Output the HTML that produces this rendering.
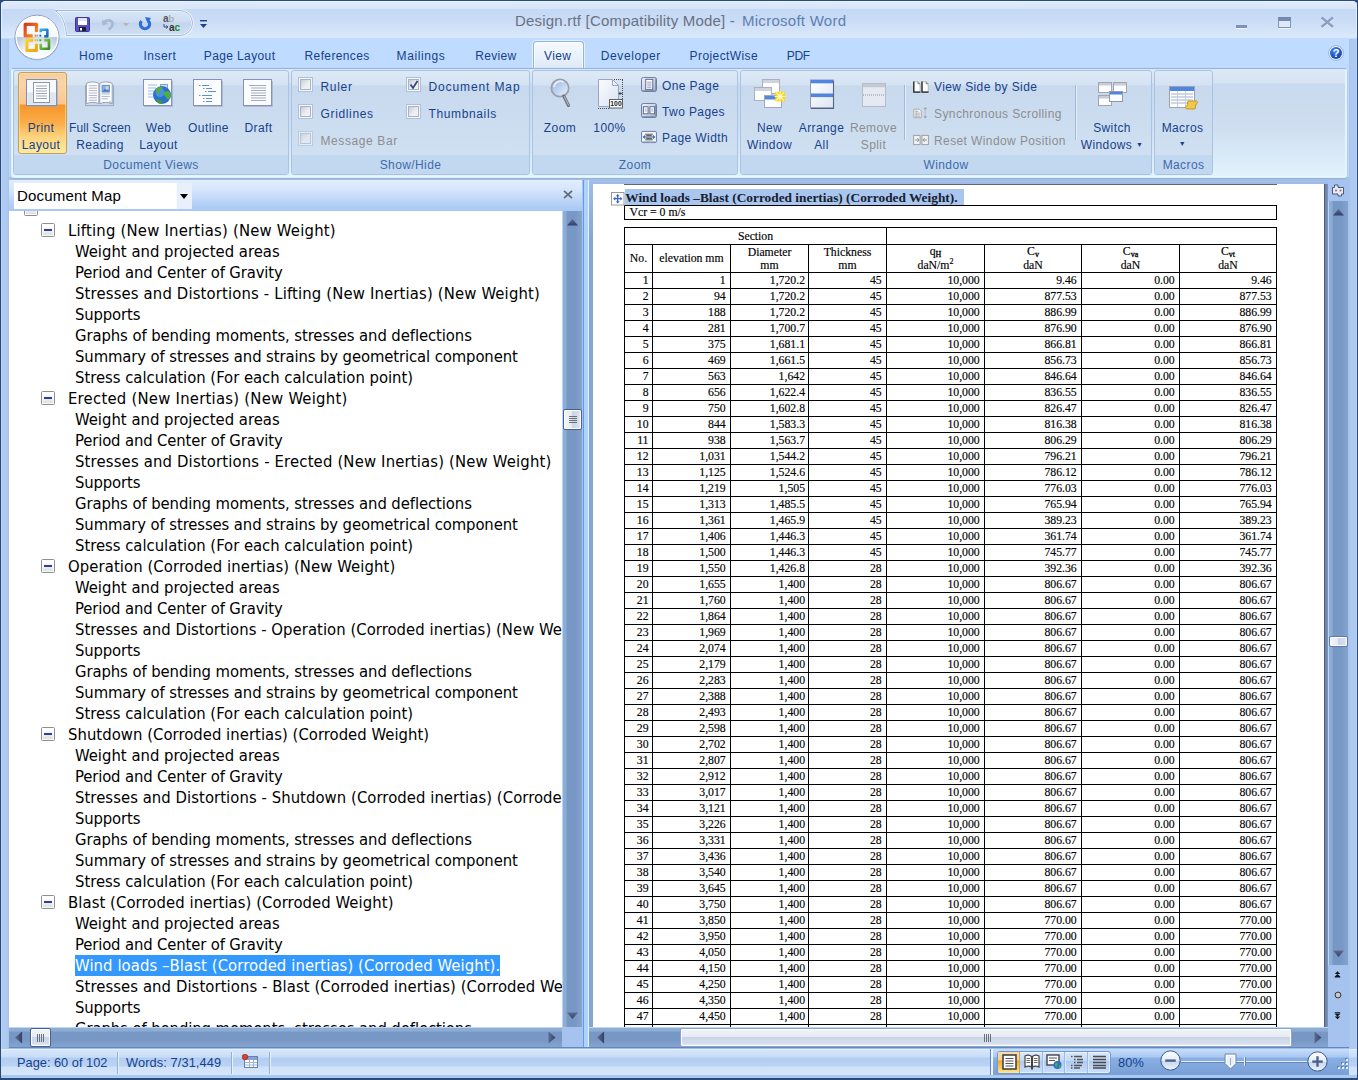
<!DOCTYPE html>
<html lang="en">
<head>
<meta charset="utf-8">
<title>Design.rtf [Compatibility Mode] - Microsoft Word</title>
<style>
*{box-sizing:border-box;margin:0;padding:0}
html,body{width:1358px;height:1080px;overflow:hidden}
body{position:relative;background:#2a4a7a;font-family:"Liberation Sans",sans-serif;font-size:12px;color:#15428b}
.abs{position:absolute}
#win{position:absolute;left:1px;top:1px;width:1356px;height:1077px;background:#bfdbff;border-radius:4.500px 4.500px 0 0;overflow:hidden}
#titlebar{position:absolute;left:0;top:0;width:1356px;height:37px;background:linear-gradient(#eef5fd 0,#e0ebfa 1px,#d6e5f9 8px,#c5d9f5 8.500px,#cadcf6 20px,#dae8fa 36px);box-shadow:inset 1px 0 0 #e6f0fc,inset -1px 0 0 #e6f0fc}
#titlebar:after{content:"";position:absolute;left:0;right:0;bottom:0;height:1px;background:#d9e9fb}
#lframe{position:absolute;left:0;top:38px;width:8px;bottom:0;background:linear-gradient(90deg,#c5d9f5 0,#afcaf0 1px,#afcaf0 6px,#a7c2ea 8px)}
#rframe{position:absolute;right:0;top:38px;width:8px;bottom:0;background:linear-gradient(90deg,#a9c4ec 0,#afcaf0 2px,#afcaf0 7px,#c5d9f5 8px)}
#title{position:absolute;left:514px;top:10.500px;font-size:15px;letter-spacing:.27px;color:#5e6f8c;white-space:nowrap}
/* tabs */
.tab{position:absolute;top:48px;font-size:12px;letter-spacing:.4px;white-space:nowrap;color:#15428b}
#acttab{position:absolute;left:532px;top:40px;width:51px;height:28px;border:1px solid #8fb4e6;border-bottom:none;border-radius:3.500px 3.500px 0 0;background:linear-gradient(#f6faff,#e9f1fc 55%,#dde8f6);box-shadow:0 0 0 1px rgba(232,243,255,.85),inset 0 0 0 1px rgba(255,255,255,.7)}
/* ribbon */
#ribbon{position:absolute;left:10px;top:67px;width:1336px;height:110px;border:1px solid #dff4ff;border-top-color:#8fb3e4;box-shadow:inset 0 -1px 0 #e6f8ff,inset 1px 0 0 #e6f8ff,inset -1px 0 0 #e6f8ff,0 1px 2px 0 #94abcc;border-radius:3px;background:linear-gradient(#dfe9f6 0,#d6e3f3 14px,#c9d9ee 15px,#cfdff0 60px,#e2f3fd 100%)}
.grp{position:absolute;top:69px;height:105px;border:1px solid #a9c3e4;border-radius:3px;background:linear-gradient(#dfe9f6 0,#d4e2f3 14px,#c8d9ee 15px,#d0e0f2 85px);overflow:hidden}
.grp .glab{position:absolute;left:0;right:0;bottom:0;height:19px;background:#c2d8f1;text-align:center;font-size:12px;letter-spacing:.4px;line-height:21px;color:#3e6aaa}
.bl{position:absolute;text-align:center;font-size:12px;letter-spacing:.4px;line-height:17px;white-space:nowrap;color:#15428b;transform:translateX(-50%)}
.sl{position:absolute;font-size:12px;letter-spacing:.4px;line-height:14px;white-space:nowrap;color:#15428b}
.dis{color:#8d8d8d}
.cb{position:absolute;width:15px;height:15px;border:1px solid #a9c0e2;background:linear-gradient(135deg,#c6ccd5 15%,#eceef1 55%,#f6f6f6);box-shadow:inset 0 0 0 1px #f7f7f7,inset 0 0 0 2px #aab3c2}
/* doc map */
#mapwrap{position:absolute;left:8px;top:179px;width:574px;height:868px;background:#c5dcf8}
#maphead{position:absolute;left:0;top:0;width:574px;height:31px;background:linear-gradient(#e3eeff 0,#d5e5fc 10px,#b4d0f7 24px,#a7c7f4 31px)}
#mapcombo{position:absolute;left:5px;top:3px;width:178px;height:26px;background:#fff;font-family:"Liberation Sans",sans-serif;font-size:15px;letter-spacing:.2px;color:#000;line-height:25px;padding-left:3px}
#mapcombo i{position:absolute;right:0;top:0;width:16px;height:26px;background:#e9f0fb;border-left:1px solid #f8fbff}
#mapcombo i:after{content:"";position:absolute;left:2.500px;top:10.500px;border:4.700px solid transparent;border-top:5px solid #000;border-bottom:none}
#maplist{position:absolute;left:0;top:31px;width:553px;height:816px;background:#fff;overflow:hidden;color:#000;font-family:"DejaVu Sans Condensed","Liberation Sans",sans-serif;font-size:16.5px;letter-spacing:0;line-height:21px;white-space:nowrap}
#maplist .in{position:absolute;left:0;top:-12px}
.l1{padding-left:59px;position:relative;height:21px}
.l2{padding-left:66px;height:21px}
.mn{position:absolute;left:32px;top:3px;width:14px;height:14px;border:1px solid #8e8e8e;border-radius:1.500px;background:linear-gradient(#fff 20%,#dcdcdc);box-shadow:inset 0 0 0 1px rgba(255,255,255,.8)}
.mn:after{content:"";position:absolute;left:2px;top:5px;width:8px;height:2px;background:#2c3f9c}
.l0{padding-left:42px;position:relative;height:21px}
.l0 .mn{left:15px}
.l0 span{position:relative;top:-7px}
.sel{background:#3399ff;color:#fff;display:inline-block;height:21px}
/* doc */
#docwrap{position:absolute;left:588px;top:179px;width:739px;height:847px;background:linear-gradient(#a3c0e9 0,#9dbbe8 5px,#84a5d6 60px);overflow:hidden}
#page{position:absolute;left:4px;top:4px;width:732px;height:860px;border-right:1px solid #4f5f7c;box-shadow:1px 0 0 #6c82a8,2px 0 0 #7189b0,3px 0 0 #7a93bb;background:#fff;font-family:"Liberation Serif",serif;color:#000;font-size:12px}
table{border-collapse:collapse;table-layout:fixed}
#dt{position:absolute;left:31px;top:43px;width:653px}
#dt td,#dt th{border:1px solid #000;font-weight:normal;font-size:11.75px;line-height:15px;height:16px;padding:0 4.300px 0 0;text-align:right;overflow:hidden;white-space:nowrap;-webkit-text-stroke:.15px #000}
#dt td:nth-child(3){padding-right:3px}
#dt td:nth-child(1){padding-right:3.500px}
#dt th{text-align:center;padding:0;line-height:13px}
/* status */
#status{position:absolute;left:0;top:1048px;width:1356px;height:26px;background:linear-gradient(#f3f8fe 0,#d6e6fa 1px,#c9ddf8 8px,#b3cdf3 9px,#bad3f4 17px,#cfe1f8 18px,#d6e6fa 26px);font-size:12.800px;color:#15428b}
#srt{position:absolute;left:991px;top:0;width:357px;height:26px;background:linear-gradient(#c9def9 0,#a9c8f3 8px,#8aafe3 9px,#7a9fd6 26px)}
#status .t{position:absolute;top:6px;letter-spacing:.1px;white-space:nowrap}
.ssep{position:absolute;top:3px;width:2px;height:22px;border-left:1px solid #8fb0dd;border-right:1px solid #e8f1fd}

.vsb{background:linear-gradient(90deg,#b9d7ff 0,#b9d7ff 1px,#8fadd3 1px,#8fadd3 4px,#7797c5 5px,#7797c5 13px,#84a2cb 19px)}
.hsb{background:linear-gradient(#b9d7ff 0,#b9d7ff 1px,#8fadd3 1px,#8fadd3 4px,#7797c5 5px,#7797c5 13px,#84a2cb 19px)}
.thumb{border:1px solid #4a5f8f;border-radius:2px;background:linear-gradient(90deg,#f2f4f7 0,#e6ebf3 45%,#c9d6e8 50%,#d5dfee 85%,#edf1f7);box-shadow:inset 0 0 0 1px #fff}
.thumbh{border:1px solid #4a5f8f;border-radius:2px;background:linear-gradient(#f2f4f7 0,#e6ebf3 45%,#c9d6e8 50%,#d5dfee 85%,#edf1f7);box-shadow:inset 0 0 0 1px #fff}
.gh{position:absolute;left:5px;top:6px;width:8px;height:7px;background:repeating-linear-gradient(#6b6f78 0,#6b6f78 1px,transparent 1px,transparent 2px)}
.gv{position:absolute;left:6px;top:5px;width:7px;height:8px;background:repeating-linear-gradient(90deg,#6b6f78 0,#6b6f78 1px,transparent 1px,transparent 2px)}
.vsep{position:absolute;top:3px;width:1px;height:21px;background:#9dbbe6;box-shadow:1px 0 0 #dbe8fa}
.sb{font-size:8px;position:relative;top:1.500px;-webkit-text-stroke:.3px #000}
</style>
</head>
<body>
<div id="win">
<div id="titlebar"></div>
<div id="lframe"></div><div id="rframe"></div>
<div id="title"><span style="letter-spacing:.2px;color:#6a7182">Design.rtf [Compatibility Mode] - </span><span style="color:#5f7fb2;position:absolute;left:227px;top:0">Microsoft Word</span></div>

<!--QAT-->
<!-- QAT pill -->
<svg class="abs" style="left:40px;top:8px" width="180" height="32" viewBox="0 0 180 32">
 <defs><linearGradient id="qg" x1="0" y1="0" x2="0" y2="1"><stop offset="0" stop-color="#d9e6f8"/><stop offset=".45" stop-color="#cddcf2"/><stop offset=".5" stop-color="#c3d5ee"/><stop offset="1" stop-color="#cfdff4"/></linearGradient></defs>
 <path d="M14 1.500H139a12.500 12.500 0 0 1 0 25H25.500C25 16 21 5 14 1.500Z" fill="url(#qg)" stroke="#f4f8fd" stroke-width="2.400"/>
 <path d="M14 1.500H139a12.500 12.500 0 0 1 0 25H25.500C25 16 21 5 14 1.500Z" fill="none" stroke="#9db9dd" stroke-width="1"/>
</svg>
<!-- save -->
<svg class="abs" style="left:74px;top:16px" width="15" height="15" viewBox="0 0 15 15"><rect x=".5" y=".5" width="14" height="14" rx="1" fill="#5452c4" stroke="#3a3796"/><rect x="3" y="1" width="9" height="7" fill="#fff"/><rect x="3" y="1" width="9" height="3" fill="#dfe4f2"/><rect x="4" y="10" width="7" height="4" fill="#1c1c3a"/><rect x="5" y="11" width="2" height="2.500" fill="#fff"/></svg>
<!-- undo -->
<svg class="abs" style="left:100px;top:16px" width="14" height="14" viewBox="0 0 14 14"><path d="M2 6.500C5 2 11 2.500 11.500 6.500c.3 2.500-1.500 4.500-4 6" fill="none" stroke="#a9b9d2" stroke-width="2.800"/><path d="M1 2.500l.5 6 5.500-1.500z" fill="#a9b9d2"/></svg>
<svg class="abs" style="left:122px;top:22px" width="6" height="4" viewBox="0 0 6 4"><path d="M0 0h6L3 3.500z" fill="#b5b5b5"/></svg>
<!-- redo -->
<svg class="abs" style="left:137px;top:16px" width="14" height="14" viewBox="0 0 14 14"><path d="M3.500 4A4.600 4.600 0 1 0 10.500 4" fill="none" stroke="#2f6edb" stroke-width="3.200"/><path d="M7 0l6 1-3.500 5z" fill="#2f6edb"/></svg>
<!-- ab ac -->
<div class="abs" style="left:162px;top:13px;font-size:10px;line-height:9px;color:#555;font-weight:bold;letter-spacing:0"><span style="font-family:'Liberation Sans',sans-serif">a</span><span style="font-family:'Liberation Serif',serif;font-weight:normal;color:#999;font-size:11px">b</span></div>
<div class="abs" style="left:168px;top:22px;font-size:10px;line-height:9px;color:#333;font-weight:bold;letter-spacing:0">a<span style="color:#1a8a1a">c</span></div>
<svg class="abs" style="left:162px;top:23px" width="6" height="6" viewBox="0 0 6 6"><path d="M1 0v3h3M3 1.500l2 1.500-2 1.500" fill="none" stroke="#3a4a8a" stroke-width="1"/></svg>
<!-- customize -->
<svg class="abs" style="left:199px;top:18px" width="8" height="10" viewBox="0 0 8 10"><rect x="0" y="1" width="7" height="1.400" fill="#1f3f88"/><path d="M0 5h7L3.500 9z" fill="#1f3f88"/></svg>

<!-- office button -->
<svg class="abs" style="left:11.700px;top:11.500px" width="48" height="49" viewBox="0 0 48 49">
 <defs>
  <linearGradient id="obt" x1="0" y1="0" x2="0" y2="1"><stop offset="0" stop-color="#ffffff"/><stop offset="1" stop-color="#eef1f6"/></linearGradient>
  <radialGradient id="obb" cx=".5" cy="1.050" r=".95"><stop offset="0" stop-color="#ffffff"/><stop offset=".38" stop-color="#f4f6fa"/><stop offset=".66" stop-color="#c3cfe2"/><stop offset=".86" stop-color="#9fb0cc"/></radialGradient>
  <linearGradient id="lo" x1="0" y1="0" x2="1" y2="1"><stop offset="0" stop-color="#d9381e"/><stop offset=".6" stop-color="#f26f21"/><stop offset="1" stop-color="#f99b1c"/></linearGradient>
  <linearGradient id="lb" x1="0" y1="0" x2="1" y2="1"><stop offset="0" stop-color="#35b0ee"/><stop offset="1" stop-color="#0b63b8"/></linearGradient>
  <linearGradient id="ly" x1="0" y1="0" x2="1" y2="1"><stop offset="0" stop-color="#fbd21a"/><stop offset="1" stop-color="#f4a20c"/></linearGradient>
  <linearGradient id="lg" x1="0" y1="0" x2="1" y2="1"><stop offset="0" stop-color="#9bd04a"/><stop offset="1" stop-color="#2f8f2a"/></linearGradient>
  <clipPath id="ct"><rect x="0" y="0" width="48" height="24.300"/></clipPath>
  <clipPath id="cb"><rect x="0" y="24.300" width="48" height="26"/></clipPath>
 </defs>
 <circle cx="24" cy="25.200" r="22.300" fill="#7a8cab" fill-opacity=".35"/>
 <circle cx="24" cy="24.200" r="22.300" fill="url(#obt)" clip-path="url(#ct)"/>
 <circle cx="24" cy="24.200" r="22.300" fill="url(#obb)" clip-path="url(#cb)"/>
 <circle cx="24" cy="24.200" r="22" fill="none" stroke="#8c9cba" stroke-width="1"/>
 <circle cx="24" cy="24.200" r="20.800" fill="none" stroke="#fff" stroke-width="1.400" stroke-opacity=".9"/>
 <path d="M23.500 19V11.300H12.200V22.900H19.800" fill="none" stroke="url(#lo)" stroke-width="3.200" stroke-linejoin="round"/>
 <path d="M27.700 19.300V16.650H34.350V23.250H31.200" fill="none" stroke="url(#lb)" stroke-width="2.500" stroke-linejoin="round"/>
 <path d="M20.200 27.300H13.900V37.400H23.400V30.800" fill="none" stroke="url(#ly)" stroke-width="3" stroke-linejoin="round"/>
 <path d="M27.750 30.800V35.750H35.950V27.150H31.200" fill="none" stroke="url(#lg)" stroke-width="2.700" stroke-linejoin="round"/>
 <rect x="21.600" y="21.700" width="1.900" height="1.900" fill="#f26f21"/><rect x="26.400" y="21.700" width="1.900" height="1.900" fill="#0b63b8"/><rect x="21.600" y="26.300" width="1.900" height="1.900" fill="#f9b714"/><rect x="26.400" y="26.300" width="1.900" height="1.900" fill="#3fae3a"/>
 <rect x="24" y="21.700" width="1.300" height="1.900" fill="#2a7fd6" fill-opacity=".6"/><rect x="24" y="26.300" width="1.300" height="1.900" fill="#6cc04a" fill-opacity=".6"/>
</svg>

<!-- window controls -->
<div class="abs" style="left:1235px;top:24px;width:11px;height:3px;background:#7d92b8;box-shadow:0 1px 0 #f0f5fc"></div>
<div class="abs" style="left:1277px;top:16px;width:13px;height:11px;border:1.500px solid #8094b8;border-top:4px solid #7489af;background:#dde8f8;box-shadow:0 1px 0 #f0f5fc"></div>
<svg class="abs" style="left:1319px;top:15px" width="15" height="13" viewBox="0 0 15 13"><path d="M1.500 1.500L13 11M13 1.500L1.500 11" stroke="#f0f5fc" stroke-width="2.600" transform="translate(0,1)"/><path d="M1.500 1.500L13 11M13 1.500L1.500 11" stroke="#8ba1c6" stroke-width="2.600"/></svg>
<!-- help -->
<svg class="abs" style="left:1327px;top:44px" width="16" height="16" viewBox="0 0 16 16"><defs><radialGradient id="hg" cx=".4" cy=".3" r=".8"><stop offset="0" stop-color="#4a8af0"/><stop offset=".6" stop-color="#1f55c8"/><stop offset="1" stop-color="#123a9a"/></radialGradient></defs><circle cx="8" cy="8" r="7.300" fill="#fff" stroke="#7f9fd8" stroke-width=".8"/><circle cx="8" cy="8" r="6" fill="url(#hg)"/><text x="8" y="12" text-anchor="middle" font-family="Liberation Sans,sans-serif" font-weight="bold" font-size="11" fill="#fff">?</text></svg>
<!--/QAT-->
<!--TABS-->
<div id="acttab"></div>
<span class="tab" style="left:78px;letter-spacing:.6px">Home</span>
<span class="tab" style="left:142.400px;letter-spacing:.5px">Insert</span>
<span class="tab" style="left:202.800px;letter-spacing:.38px">Page Layout</span>
<span class="tab" style="left:303.600px;letter-spacing:.36px">References</span>
<span class="tab" style="left:395.600px;letter-spacing:.6px">Mailings</span>
<span class="tab" style="left:474.300px;letter-spacing:.3px">Review</span>
<span class="tab" style="left:542.900px;letter-spacing:.45px">View</span>
<span class="tab" style="left:599.800px;letter-spacing:.6px">Developer</span>
<span class="tab" style="left:688.600px;letter-spacing:.41px">ProjectWise</span>
<span class="tab" style="left:785.800px;letter-spacing:-.4px">PDF</span>

<div class="abs" style="left:8px;top:176px;width:1340px;height:4px;background:#a7c3ec"></div>
<div id="ribbon"></div>
<!--GROUPS-->
<!-- group 1: Document Views -->
<div class="grp" style="left:12px;width:276px">
 <div class="abs" style="left:3.500px;top:1px;width:49px;height:82px;border:1px solid #c2a05a;border-radius:3px;background:linear-gradient(#f8cd9c 0,#fad4a8 10px,#fbc68e 31px,#f8952a 32px,#fbae49 50px,#fdd37e 64px,#fdea9e 79px);box-shadow:inset 0 0 0 1px rgba(255,230,170,.55)"></div>
 <svg class="abs" style="left:11px;top:7px" width="34" height="30" viewBox="0 0 34 30"><rect x="1.5" y="1.5" width="30" height="26" fill="#eef2f8" stroke="#7d8fb3"/><rect x="2.5" y="2.5" width="28" height="12" fill="#f7f9fc"/><rect x="2.5" y="14.5" width="28" height="12" fill="#dfe6f0"/><rect x="8.5" y="4.5" width="16" height="20" fill="#fff" stroke="#8b97b1"/><path d="M11 8h11M11 10.5h11M11 13h11M11 15.5h11M11 18h11M11 20.5h11" stroke="#9aa5ba" stroke-width="1"/><path d="M2 28.5h31M32.5 3v25" stroke="#9aa5c2" stroke-opacity=".6"/></svg>
 <div class="bl" style="left:27px;top:49px">Print<br>Layout</div>

 <svg class="abs" style="left:71px;top:9px" width="29.500" height="27" viewBox="0 0 32 28" preserveAspectRatio="none"><path d="M1.5 3.5C6 1.5 11 1.5 15 3.5V24.5C11 22.8 6 22.8 1.5 24.5Z" fill="#fff" stroke="#8f9bb0"/><path d="M29.5 3.5C25 1.5 20 1.5 16 3.5V24.5C20 22.8 25 22.8 29.5 24.5Z" fill="#fff" stroke="#8f9bb0"/><path d="M0.5 5.5V26.5H31V5.5" fill="none" stroke="#9aa4b8"/><path d="M4 6h9M4 8.5h9M4 11h9M4 13.5h9M4 16h9M4 18.5h9M4 21h9M18 14.500h9M18 17h9M18 19.500h7" stroke="#a8b0c0" stroke-width="1"/><rect x="18.500" y="5.500" width="8" height="7" fill="#7fb2f0" stroke="#5d8ed0"/><circle cx="24" cy="8" r="1.800" fill="#f7c9a0"/><path d="M19 12l2.500-3 2 2 1.500-1 1.500 2z" fill="#3f78c8"/><path d="M27 22l2.500 2.500H27z" fill="#d9dde6" stroke="#8f9bb0" stroke-width=".7"/></svg>
 <div class="bl" style="left:86px;top:49px"><span style="letter-spacing:.1px">Full Screen</span><br>Reading</div>

 <svg class="abs" style="left:128px;top:7px" width="32" height="30" viewBox="0 0 32 30"><rect x="1.500" y="1.500" width="28" height="26" fill="#fbfcfe" stroke="#8593b2"/><path d="M2 28.500h29M30.500 3v25" stroke="#9aa5c2" stroke-opacity=".6"/><path d="M6 7h9M6 10h8M6 13h6M6 16h5M6 19h5" stroke="#9dbbe8" stroke-width="1"/><rect x="18.500" y="6.500" width="7" height="5" fill="#cfe0f7" stroke="#7fa4dc"/><circle cx="20" cy="17" r="9" fill="#2a6fd0"/><circle cx="18" cy="14.500" r="4.500" fill="#6aa8f0" fill-opacity=".55"/><path d="M13.500 11.500c2-2 5-3 7-2.500 1 1.500-1 2.500-2.500 3-1 2 .5 3-1 4.500-1.500-.5-2.500-2-3.500-5z" fill="#4fae3c"/><path d="M22 14c2-1.500 5-1 6.500 1 .5 2.500 0 4.500-1.500 6.500-1.500.500-2.500-1-3-2.500-1.500-1-3-3-2-5z" fill="#4fae3c"/><path d="M14 22c1.500-1 4-.500 6 1 1 1 .5 2.500-.5 3-2.500 0-4.500-1.500-5.500-4z" fill="#3f9a30"/></svg>
 <div class="bl" style="left:144.500px;top:49px">Web<br>Layout</div>

 <svg class="abs" style="left:178px;top:7px" width="32" height="30" viewBox="0 0 32 30"><rect x="1.500" y="1.500" width="28" height="26" fill="#fbfcfe" stroke="#8593b2"/><path d="M2 28.500h29M30.500 3v25" stroke="#9aa5c2" stroke-opacity=".6"/><path d="M10 7.500h7M14 10.500h6M16 13.500h8M10 17.500h10M14 20.500h6M14 23.500h6" stroke="#5c8fd8" stroke-width="1.200"/><path d="M7 7.500h1.500M11 10.500h1.500M13 13.500h1.500M7 17.500h1.500M11 20.500h1.500M11 23.500h1.500" stroke="#7f8ea8" stroke-width="1.200"/></svg>
 <div class="bl" style="left:194.500px;top:49px">Outline</div>

 <svg class="abs" style="left:228px;top:7px" width="32" height="30" viewBox="0 0 32 30"><rect x="1.500" y="1.500" width="28" height="26" fill="#fbfcfe" stroke="#8593b2"/><path d="M2 28.500h29M30.500 3v25" stroke="#9aa5c2" stroke-opacity=".6"/><path d="M7 7.500h17M9 10h15M9 12.500h15M9 15h15M9 17.500h15M9 20h15M9 22.500h15" stroke="#a3abbd" stroke-width="1"/></svg>
 <div class="bl" style="left:244.500px;top:49px">Draft</div>
 <div class="glab">Document Views</div>
</div>

<!-- group 2: Show/Hide -->
<div class="grp" style="left:290px;width:239px">
 <i class="cb" style="left:6px;top:6px"></i><span class="sl" style="left:28.500px;top:9px;letter-spacing:.7px">Ruler</span>
 <i class="cb" style="left:6px;top:33px"></i><span class="sl" style="left:28.500px;top:36px;letter-spacing:.65px">Gridlines</span>
 <i class="cb" style="left:6px;top:60px;opacity:.6"></i><span class="sl dis" style="left:28.500px;top:63px;letter-spacing:.6px">Message Bar</span>
 <i class="cb" style="left:114px;top:6px"></i><svg class="abs" style="left:117px;top:8.500px" width="10" height="10" viewBox="0 0 10 10"><path d="M1.500 4.500L4 8 8.500 1" fill="none" stroke="#33477e" stroke-width="1.800"/></svg><span class="sl" style="left:136.500px;top:9px;letter-spacing:.88px">Document Map</span>
 <i class="cb" style="left:114px;top:33px"></i><span class="sl" style="left:136.500px;top:36px;letter-spacing:.63px">Thumbnails</span>
 <div class="glab">Show/Hide</div>
</div>

<!-- group 3: Zoom -->
<div class="grp" style="left:531px;width:206px">
 <svg class="abs" style="left:16px;top:6px" width="24" height="32" viewBox="0 0 24 32"><defs><linearGradient id="lens" x1="0" y1="0" x2="1" y2="1"><stop offset="0" stop-color="#8fb1df"/><stop offset=".55" stop-color="#c3d6f0"/><stop offset="1" stop-color="#e9f1fb"/></linearGradient></defs><circle cx="11" cy="11" r="8.700" fill="url(#lens)" stroke="#9a9fa8" stroke-width="1.700"/><path d="M5 10a6.500 6.500 0 0 1 9.500-5" fill="none" stroke="#fff" stroke-width="1.800" stroke-opacity=".75"/><path d="M14.800 19l4.700 9.500" stroke="#6c6f78" stroke-width="3.100" stroke-linecap="round"/><path d="M15.300 19.500l4.300 8.700" stroke="#c2c5cd" stroke-width="1" stroke-linecap="round"/></svg>
 <div class="bl" style="left:27px;top:49px">Zoom</div>
 <svg class="abs" style="left:63px;top:7px" width="28" height="32" viewBox="0 0 28 32"><defs><linearGradient id="pg1" x1="0" y1="0" x2="1" y2="1"><stop offset="0" stop-color="#fbfcfe"/><stop offset="1" stop-color="#d9e3f3"/></linearGradient></defs><path d="M2.500 1.500h14l6 6v21h-20z" fill="url(#pg1)" stroke="#9ba6ba"/><path d="M16.500 1.500v6h6z" fill="#eef2f8" stroke="#9ba6ba"/><path d="M18 1.500h9M26.500 2v20M2 30.500h11" stroke="#4d4d4d" stroke-dasharray="1 1"/><path d="M23 15.500h3.500M24.500 14l-1.500 1.500 1.500 1.500" fill="none" stroke="#333" stroke-width=".9"/><rect x="13.500" y="21.500" width="13" height="8.500" fill="#fff" stroke="#5f5f5f"/><text x="20" y="28.300" font-family="Liberation Sans,sans-serif" font-size="6.800" font-weight="bold" text-anchor="middle" fill="#222">100</text></svg>
 <div class="bl" style="left:76.500px;top:49px">100%</div>
 <svg class="abs" style="left:108px;top:6px" width="16" height="15" viewBox="0 0 17 16"><defs><linearGradient id="sbg" x1="0" y1="0" x2="1" y2="1"><stop offset="0" stop-color="#eef2f8"/><stop offset=".6" stop-color="#c5d0e2"/><stop offset="1" stop-color="#9fb0ca"/></linearGradient></defs><rect x=".5" y=".5" width="16" height="15" rx="2" fill="url(#sbg)" stroke="#65759c"/><path d="M1.500 14.500h14M15.500 2v12" stroke="#7f8fb0" stroke-width="1"/><rect x="5" y="2.500" width="7.500" height="11" fill="#fff" stroke="#59678a"/><path d="M6.500 5.500h4.500M6.500 7.500h4.500M6.500 9.500h4.500M6.500 11.500h4.500" stroke="#7d8cb5" stroke-width=".9"/></svg>
 <span class="sl" style="left:129px;top:8px">One Page</span>
 <svg class="abs" style="left:108px;top:32px" width="16" height="15" viewBox="0 0 17 16"><rect x=".5" y=".5" width="16" height="15" rx="2" fill="url(#sbg)" stroke="#65759c"/><path d="M1.500 14.500h14M15.500 2v12" stroke="#7f8fb0" stroke-width="1"/><rect x="2.500" y="4" width="5" height="7.500" fill="#fff" stroke="#59678a"/><rect x="9.500" y="4" width="5" height="7.500" fill="#fff" stroke="#59678a"/><path d="M4 6.500h2M4 8.500h2M11 6.500h2M11 8.500h2" stroke="#7d8cb5" stroke-width=".9"/></svg>
 <span class="sl" style="left:129px;top:34px">Two Pages</span>
 <svg class="abs" style="left:108px;top:59px" width="16" height="14" viewBox="0 0 17 15"><rect x=".5" y="1.500" width="16" height="12" rx="1.500" fill="#f4f7fc" stroke="#65759c"/><path d="M1.500 12.500h14" stroke="#9fb0ca"/><path d="M4.500 4.500h8M4.500 7.500h8M4.500 10.500h8M5.500 6h6M5.500 9h6" stroke="#333" stroke-width=".9"/><path d="M4.500 5l-3 2.500 3 2.500zM12.500 5l3 2.500-3 2.500z" fill="#2f6fd6"/></svg>
 <span class="sl" style="left:129px;top:60px">Page Width</span>
 <div class="glab">Zoom</div>
</div>

<!-- group 4: Window -->
<div class="grp" style="left:739px;width:412px">
 <svg class="abs" style="left:12px;top:7px" width="34" height="32" viewBox="0 0 34 32"><rect x="9.500" y="1.500" width="17" height="14" fill="#fdfdfe" stroke="#a9b0bf"/><rect x="10" y="2" width="16" height="3" fill="#cfd3dc"/><rect x="1.500" y="9.500" width="17" height="13" fill="#fdfdfe" stroke="#a9b0bf"/><rect x="2" y="10" width="16" height="3" fill="#cfd3dc"/><rect x="11.500" y="17.500" width="17" height="12" fill="#fdfdfe" stroke="#9fa8ba"/><rect x="12" y="18" width="16" height="3.500" fill="#4f86e0"/><g transform="translate(0,3.500)"><rect x="22.300" y="10.300" width="9.600" height="9.600" fill="#ffd60a"/><path d="M27 9.500v11M21.500 15h11M23 11l8 8M31 11l-8 8" stroke="#fff3a0" stroke-width="1.100"/><circle cx="27" cy="15" r="2.300" fill="#fffbe0"/></g></svg>
 <div class="bl" style="left:28.500px;top:49px">New<br>Window</div>
 <svg class="abs" style="left:68px;top:8px" width="26" height="31" viewBox="0 0 26 31"><defs><linearGradient id="wg" x1="0" y1="0" x2="1" y2="1"><stop offset="0" stop-color="#ffffff"/><stop offset="1" stop-color="#dde5f3"/></linearGradient></defs><rect x="1.500" y="1" width="23" height="28" fill="url(#wg)" stroke="#8f9bb4"/><rect x="2" y="1" width="22" height="3.300" fill="#4f86e0"/><rect x="2" y="14.800" width="22" height="3.300" fill="#4f86e0"/><path d="M2 14.500h22" stroke="#9fb0d0" stroke-width=".8"/><path d="M24.500 2v27.500M2 29.400h23" stroke="#56647f" stroke-width="1.100"/></svg>
 <div class="bl" style="left:80.500px;top:49px">Arrange<br>All</div>
 <svg class="abs" style="left:120px;top:11px" width="26" height="26" viewBox="0 0 26 25" preserveAspectRatio="none"><rect x="1.500" y="1.500" width="23" height="22" fill="#e4e9f2" stroke="#b4bccb"/><rect x="2" y="2" width="22" height="3" fill="#c3c8d2"/><path d="M2 12.500h22" stroke="#8a8f9c" stroke-dasharray="1 1"/></svg>
 <div class="bl dis" style="left:132.500px;top:49px">Remove<br>Split</div>
 <div class="abs" style="left:163px;top:14px;width:1px;height:55px;background:#9db9dc;box-shadow:1px 0 0 #e3eefb"></div>
 <svg class="abs" style="left:172px;top:9.500px" width="16" height="12" viewBox="0 0 16 12"><path d="M.8 .8h4.200l2 2v8H.8z" fill="#fff" stroke="#9a9a9a" stroke-width=".6"/><path d="M9 .8h4.200l2 2v8H9z" fill="#fff" stroke="#9a9a9a" stroke-width=".6"/><path d="M.8 .5v10.700h6.600M9 .5v10.700h6.600" fill="none" stroke="#222" stroke-width="1.300"/><path d="M5 .8v2h2M13.200 .8v2h2" fill="none" stroke="#555" stroke-width=".7"/></svg>
 <span class="sl" style="left:193px;top:9px">View Side by Side</span>
 <svg class="abs" style="left:172px;top:34px" width="16" height="15" viewBox="0 0 17 16"><path d="M.8 4.500h6l2 2v7H.8z" fill="#f4f4f4" stroke="#a2a2a2" stroke-width=".9"/><path d="M2 7h3.500M2 8.700h5.500M2 10.400h5.500M2 12.100h5.500" stroke="#a8a8a8" stroke-width=".8"/><path d="M3.500 5.500v8" stroke="#b5b5b5" stroke-width=".8"/><path d="M13 3v11" stroke="#9a9a9a" stroke-dasharray="1 1"/><path d="M11 4.500l2-2.500 2 2.500zM11 12l2 2.500 2-2.500z" fill="#a2a2a2"/></svg>
 <span class="sl dis" style="left:193px;top:36px">Synchronous Scrolling</span>
 <svg class="abs" style="left:172px;top:63px" width="16" height="12" viewBox="0 0 17 13"><rect x=".5" y="1.500" width="7" height="10" fill="#f2f2f2" stroke="#9a9a9a"/><rect x="9.500" y="1.500" width="7" height="10" fill="#f2f2f2" stroke="#9a9a9a"/><path d="M2 6.500h4M4.500 4.500l2 2-2 2M15 6.500h-4M12.500 4.500l-2 2 2 2" fill="none" stroke="#8a8a8a"/></svg>
 <span class="sl dis" style="left:193px;top:63px">Reset Window Position</span>
 <div class="abs" style="left:334px;top:14px;width:1px;height:55px;background:#9db9dc;box-shadow:1px 0 0 #e3eefb"></div>
 <svg class="abs" style="left:356px;top:10px" width="31" height="27" viewBox="0 0 31 27"><rect x="1.500" y="1.500" width="13" height="10" fill="#fdfdfe" stroke="#a0a5b0"/><rect x="2" y="2" width="12" height="2.500" fill="#c9ccd3"/><rect x="16.500" y="1.500" width="13" height="10" fill="#fdfdfe" stroke="#a0a5b0"/><rect x="17" y="2" width="12" height="2.500" fill="#c9ccd3"/><rect x="1.500" y="14.500" width="13" height="10" fill="#fdfdfe" stroke="#a0a5b0"/><rect x="2" y="15" width="12" height="2.500" fill="#c9ccd3"/><rect x="12.500" y="10.500" width="13" height="10" fill="#fdfdfe" stroke="#8f9ab0"/><rect x="13" y="11" width="12" height="2.500" fill="#4f86e0"/></svg>
 <div class="bl" style="left:371px;top:49px">Switch<br>Windows <span style="font-size:7px;position:relative;top:-2px">&#9660;</span></div>
 <div class="glab">Window</div>
</div>

<!-- group 5: Macros -->
<div class="grp" style="left:1153px;width:59px">
 <svg class="abs" style="left:13px;top:14px" width="32" height="27" viewBox="0 0 32 27"><rect x="1.500" y="1.500" width="25" height="21" fill="#fff" stroke="#9aa3b5"/><rect x="2" y="2" width="24" height="4" fill="#4f86e0"/><path d="M3 9h22M3 12h22M3 15h22M3 18h22" stroke="#9fb0cc" stroke-width="1"/><path d="M9.500 6v16M17.500 6v16" stroke="#c3cee0" stroke-width="1"/><path d="M20 16h8c2 0 2 3 0 3l-1 5h-8c-2 0-2-3 0-3z" fill="#f2c744" stroke="#b98a1a" stroke-width=".8"/></svg>
 <div class="bl" style="left:27.500px;top:49px">Macros<br><span style="font-size:7px;position:relative;top:-3px">&#9660;</span></div>
 <div class="glab">Macros</div>
</div>
<!--/GROUPS-->

<!--DOCMAP-->
<div id="mapwrap">
 <div id="maphead"><div id="mapcombo">Document Map<i></i></div></div>
 <div id="maplist"><div class="in">
<div class="l0"><i class="mn"></i><span>Load cases: Transport, Lifting, Erecting</span></div>
<div class="l1" style="letter-spacing:0.214px"><i class="mn"></i>Lifting (New Inertias) (New Weight)</div>
<div class="l2" style="letter-spacing:0.006px">Weight and projected areas</div>
<div class="l2" style="letter-spacing:-0.139px">Period and Center of Gravity</div>
<div class="l2" style="letter-spacing:0.155px">Stresses and Distortions - Lifting (New Inertias) (New Weight)</div>
<div class="l2" style="letter-spacing:-0.15px">Supports</div>
<div class="l2" style="letter-spacing:-0.084px">Graphs of bending moments, stresses and deflections</div>
<div class="l2" style="letter-spacing:-0.105px">Summary of stresses and strains by geometrical component</div>
<div class="l2" style="letter-spacing:-0.014px">Stress calculation (For each calculation point)</div>
<div class="l1" style="letter-spacing:0.243px"><i class="mn"></i>Erected (New Inertias) (New Weight)</div>
<div class="l2" style="letter-spacing:0.006px">Weight and projected areas</div>
<div class="l2" style="letter-spacing:-0.139px">Period and Center of Gravity</div>
<div class="l2" style="letter-spacing:0.167px">Stresses and Distortions - Erected (New Inertias) (New Weight)</div>
<div class="l2" style="letter-spacing:-0.15px">Supports</div>
<div class="l2" style="letter-spacing:-0.084px">Graphs of bending moments, stresses and deflections</div>
<div class="l2" style="letter-spacing:-0.105px">Summary of stresses and strains by geometrical component</div>
<div class="l2" style="letter-spacing:-0.014px">Stress calculation (For each calculation point)</div>
<div class="l1" style="letter-spacing:0.09px"><i class="mn"></i>Operation (Corroded inertias) (New Weight)</div>
<div class="l2" style="letter-spacing:0.006px">Weight and projected areas</div>
<div class="l2" style="letter-spacing:-0.139px">Period and Center of Gravity</div>
<div class="l2" style="letter-spacing:0.048px">Stresses and Distortions - Operation (Corroded inertias) (New Weight)</div>
<div class="l2" style="letter-spacing:-0.15px">Supports</div>
<div class="l2" style="letter-spacing:-0.084px">Graphs of bending moments, stresses and deflections</div>
<div class="l2" style="letter-spacing:-0.105px">Summary of stresses and strains by geometrical component</div>
<div class="l2" style="letter-spacing:-0.014px">Stress calculation (For each calculation point)</div>
<div class="l1" style="letter-spacing:0.038px"><i class="mn"></i>Shutdown (Corroded inertias) (Corroded Weight)</div>
<div class="l2" style="letter-spacing:0.006px">Weight and projected areas</div>
<div class="l2" style="letter-spacing:-0.139px">Period and Center of Gravity</div>
<div class="l2" style="letter-spacing:0.06px">Stresses and Distortions - Shutdown (Corroded inertias) (Corroded Weight)</div>
<div class="l2" style="letter-spacing:-0.15px">Supports</div>
<div class="l2" style="letter-spacing:-0.084px">Graphs of bending moments, stresses and deflections</div>
<div class="l2" style="letter-spacing:-0.105px">Summary of stresses and strains by geometrical component</div>
<div class="l2" style="letter-spacing:-0.014px">Stress calculation (For each calculation point)</div>
<div class="l1" style="letter-spacing:0.075px"><i class="mn"></i>Blast (Corroded inertias) (Corroded Weight)</div>
<div class="l2" style="letter-spacing:0.006px">Weight and projected areas</div>
<div class="l2" style="letter-spacing:-0.139px">Period and Center of Gravity</div>
<div class="l2" style="letter-spacing:0.084px"><span class="sel">Wind loads &ndash;Blast (Corroded inertias) (Corroded Weight).</span></div>
<div class="l2" style="letter-spacing:0.082px">Stresses and Distortions - Blast (Corroded inertias) (Corroded Weight)</div>
<div class="l2" style="letter-spacing:-0.15px">Supports</div>
<div class="l2" style="letter-spacing:-0.084px">Graphs of bending moments, stresses and deflections</div>
 </div></div>
</div>

<!--DOC-->
<div id="docwrap">
 <div id="page">
  <div class="abs" style="left:31px;top:0;width:653px;height:1px;background:#666"></div>
  <div class="abs" style="left:32px;top:5px;width:339px;height:16px;background:#a9c6ee"></div>
  <div class="abs" style="left:32.300px;top:5px;font-weight:bold;font-size:13.35px;line-height:17px;white-space:nowrap;color:#17202e">Wind loads &ndash;Blast (Corroded inertias) (Corroded Weight).</div>
  <div class="abs" style="left:31px;top:21px;width:653px;height:15px;border:1px solid #000;font-size:11.75px;line-height:14px;padding-left:4.500px;-webkit-text-stroke:.15px #000">Vcr = 0 m/s</div>
  <svg class="abs" style="left:18px;top:8px" width="14" height="14" viewBox="0 0 14 14"><rect x=".5" y=".5" width="12.500" height="12.500" fill="#fff" stroke="#9a9a9a"/><path d="M6.700 3v7.500M3 6.700h7.500" stroke="#3a66c8" stroke-width="1.300"/><path d="M6.700 2L4.800 4.300h3.800zM6.700 11.500L4.800 9.200h3.800zM2 6.700L4.300 4.800v3.800zM11.500 6.700L9.200 4.800v3.800z" fill="#3a66c8"/></svg>
  <table id="dt">
   <colgroup><col style="width:28px"><col style="width:78px"><col style="width:78px"><col style="width:78px"><col style="width:98px"><col style="width:97px"><col style="width:98px"><col style="width:97px"></colgroup>
   <tr><th colspan="4" style="height:17px;line-height:15px">Section</th><th colspan="4"></th></tr>
   <tr><th style="height:28px">No.</th><th>elevation mm</th><th>Diameter<br>mm</th><th>Thickness<br>mm</th><th>q<span class="sb">H</span><br>daN/m<sup style="font-size:8px;line-height:0">2</sup></th><th>C<span class="sb">v</span><br>daN</th><th>C<span class="sb">va</span><br>daN</th><th>C<span class="sb">vt</span><br>daN</th></tr>
<tr><td>1</td><td>1</td><td>1,720.2</td><td>45</td><td>10,000</td><td>9.46</td><td>0.00</td><td>9.46</td></tr>
<tr><td>2</td><td>94</td><td>1,720.2</td><td>45</td><td>10,000</td><td>877.53</td><td>0.00</td><td>877.53</td></tr>
<tr><td>3</td><td>188</td><td>1,720.2</td><td>45</td><td>10,000</td><td>886.99</td><td>0.00</td><td>886.99</td></tr>
<tr><td>4</td><td>281</td><td>1,700.7</td><td>45</td><td>10,000</td><td>876.90</td><td>0.00</td><td>876.90</td></tr>
<tr><td>5</td><td>375</td><td>1,681.1</td><td>45</td><td>10,000</td><td>866.81</td><td>0.00</td><td>866.81</td></tr>
<tr><td>6</td><td>469</td><td>1,661.5</td><td>45</td><td>10,000</td><td>856.73</td><td>0.00</td><td>856.73</td></tr>
<tr><td>7</td><td>563</td><td>1,642</td><td>45</td><td>10,000</td><td>846.64</td><td>0.00</td><td>846.64</td></tr>
<tr><td>8</td><td>656</td><td>1,622.4</td><td>45</td><td>10,000</td><td>836.55</td><td>0.00</td><td>836.55</td></tr>
<tr><td>9</td><td>750</td><td>1,602.8</td><td>45</td><td>10,000</td><td>826.47</td><td>0.00</td><td>826.47</td></tr>
<tr><td>10</td><td>844</td><td>1,583.3</td><td>45</td><td>10,000</td><td>816.38</td><td>0.00</td><td>816.38</td></tr>
<tr><td>11</td><td>938</td><td>1,563.7</td><td>45</td><td>10,000</td><td>806.29</td><td>0.00</td><td>806.29</td></tr>
<tr><td>12</td><td>1,031</td><td>1,544.2</td><td>45</td><td>10,000</td><td>796.21</td><td>0.00</td><td>796.21</td></tr>
<tr><td>13</td><td>1,125</td><td>1,524.6</td><td>45</td><td>10,000</td><td>786.12</td><td>0.00</td><td>786.12</td></tr>
<tr><td>14</td><td>1,219</td><td>1,505</td><td>45</td><td>10,000</td><td>776.03</td><td>0.00</td><td>776.03</td></tr>
<tr><td>15</td><td>1,313</td><td>1,485.5</td><td>45</td><td>10,000</td><td>765.94</td><td>0.00</td><td>765.94</td></tr>
<tr><td>16</td><td>1,361</td><td>1,465.9</td><td>45</td><td>10,000</td><td>389.23</td><td>0.00</td><td>389.23</td></tr>
<tr><td>17</td><td>1,406</td><td>1,446.3</td><td>45</td><td>10,000</td><td>361.74</td><td>0.00</td><td>361.74</td></tr>
<tr><td>18</td><td>1,500</td><td>1,446.3</td><td>45</td><td>10,000</td><td>745.77</td><td>0.00</td><td>745.77</td></tr>
<tr><td>19</td><td>1,550</td><td>1,426.8</td><td>28</td><td>10,000</td><td>392.36</td><td>0.00</td><td>392.36</td></tr>
<tr><td>20</td><td>1,655</td><td>1,400</td><td>28</td><td>10,000</td><td>806.67</td><td>0.00</td><td>806.67</td></tr>
<tr><td>21</td><td>1,760</td><td>1,400</td><td>28</td><td>10,000</td><td>806.67</td><td>0.00</td><td>806.67</td></tr>
<tr><td>22</td><td>1,864</td><td>1,400</td><td>28</td><td>10,000</td><td>806.67</td><td>0.00</td><td>806.67</td></tr>
<tr><td>23</td><td>1,969</td><td>1,400</td><td>28</td><td>10,000</td><td>806.67</td><td>0.00</td><td>806.67</td></tr>
<tr><td>24</td><td>2,074</td><td>1,400</td><td>28</td><td>10,000</td><td>806.67</td><td>0.00</td><td>806.67</td></tr>
<tr><td>25</td><td>2,179</td><td>1,400</td><td>28</td><td>10,000</td><td>806.67</td><td>0.00</td><td>806.67</td></tr>
<tr><td>26</td><td>2,283</td><td>1,400</td><td>28</td><td>10,000</td><td>806.67</td><td>0.00</td><td>806.67</td></tr>
<tr><td>27</td><td>2,388</td><td>1,400</td><td>28</td><td>10,000</td><td>806.67</td><td>0.00</td><td>806.67</td></tr>
<tr><td>28</td><td>2,493</td><td>1,400</td><td>28</td><td>10,000</td><td>806.67</td><td>0.00</td><td>806.67</td></tr>
<tr><td>29</td><td>2,598</td><td>1,400</td><td>28</td><td>10,000</td><td>806.67</td><td>0.00</td><td>806.67</td></tr>
<tr><td>30</td><td>2,702</td><td>1,400</td><td>28</td><td>10,000</td><td>806.67</td><td>0.00</td><td>806.67</td></tr>
<tr><td>31</td><td>2,807</td><td>1,400</td><td>28</td><td>10,000</td><td>806.67</td><td>0.00</td><td>806.67</td></tr>
<tr><td>32</td><td>2,912</td><td>1,400</td><td>28</td><td>10,000</td><td>806.67</td><td>0.00</td><td>806.67</td></tr>
<tr><td>33</td><td>3,017</td><td>1,400</td><td>28</td><td>10,000</td><td>806.67</td><td>0.00</td><td>806.67</td></tr>
<tr><td>34</td><td>3,121</td><td>1,400</td><td>28</td><td>10,000</td><td>806.67</td><td>0.00</td><td>806.67</td></tr>
<tr><td>35</td><td>3,226</td><td>1,400</td><td>28</td><td>10,000</td><td>806.67</td><td>0.00</td><td>806.67</td></tr>
<tr><td>36</td><td>3,331</td><td>1,400</td><td>28</td><td>10,000</td><td>806.67</td><td>0.00</td><td>806.67</td></tr>
<tr><td>37</td><td>3,436</td><td>1,400</td><td>28</td><td>10,000</td><td>806.67</td><td>0.00</td><td>806.67</td></tr>
<tr><td>38</td><td>3,540</td><td>1,400</td><td>28</td><td>10,000</td><td>806.67</td><td>0.00</td><td>806.67</td></tr>
<tr><td>39</td><td>3,645</td><td>1,400</td><td>28</td><td>10,000</td><td>806.67</td><td>0.00</td><td>806.67</td></tr>
<tr><td>40</td><td>3,750</td><td>1,400</td><td>28</td><td>10,000</td><td>806.67</td><td>0.00</td><td>806.67</td></tr>
<tr><td>41</td><td>3,850</td><td>1,400</td><td>28</td><td>10,000</td><td>770.00</td><td>0.00</td><td>770.00</td></tr>
<tr><td>42</td><td>3,950</td><td>1,400</td><td>28</td><td>10,000</td><td>770.00</td><td>0.00</td><td>770.00</td></tr>
<tr><td>43</td><td>4,050</td><td>1,400</td><td>28</td><td>10,000</td><td>770.00</td><td>0.00</td><td>770.00</td></tr>
<tr><td>44</td><td>4,150</td><td>1,400</td><td>28</td><td>10,000</td><td>770.00</td><td>0.00</td><td>770.00</td></tr>
<tr><td>45</td><td>4,250</td><td>1,400</td><td>28</td><td>10,000</td><td>770.00</td><td>0.00</td><td>770.00</td></tr>
<tr><td>46</td><td>4,350</td><td>1,400</td><td>28</td><td>10,000</td><td>770.00</td><td>0.00</td><td>770.00</td></tr>
<tr><td>47</td><td>4,450</td><td>1,400</td><td>28</td><td>10,000</td><td>770.00</td><td>0.00</td><td>770.00</td></tr>
<tr><td>48</td><td>4,550</td><td>1,400</td><td>28</td><td>10,000</td><td>770.00</td><td>0.00</td><td>770.00</td></tr>
  </table>
 </div>
</div>

<!--SCROLL-->
<!-- docmap scrollbars -->
<div class="abs vsb" style="left:561px;top:210px;width:20px;height:816px"></div>
<svg class="abs" style="left:566px;top:217.500px" width="11" height="7" viewBox="0 0 11 7"><defs><linearGradient id="ag" x1="0" y1="0" x2="0" y2="1"><stop offset="0" stop-color="#5d6c92"/><stop offset="1" stop-color="#35406a"/></linearGradient></defs><path d="M0 6.500L5.500 0 11 6.500z" fill="url(#ag)"/></svg>
<svg class="abs" style="left:566px;top:1011px" width="11" height="7" viewBox="0 0 11 7"><path d="M0 .5L5.500 7 11 .5z" fill="url(#ag)"/></svg>
<div class="abs thumb" style="left:562px;top:408px;width:19px;height:21px"><i class="gh"></i></div>
<div class="abs hsb" style="left:8px;top:1026px;width:553px;height:20px"></div>
<svg class="abs" style="left:14px;top:1030px" width="7.500" height="13" viewBox="0 0 8 13"><defs><linearGradient id="ah" x1="0" y1="0" x2="1" y2="0"><stop offset="0" stop-color="#5d6c92"/><stop offset="1" stop-color="#35406a"/></linearGradient></defs><path d="M7.500 0L0 6.500 7.500 13z" fill="url(#ah)"/></svg>
<svg class="abs" style="left:547px;top:1030px" width="7.500" height="13" viewBox="0 0 8 13"><path d="M.5 0L8 6.500.5 13z" fill="url(#ah)"/></svg>
<div class="abs thumbh" style="left:29px;top:1027px;width:21px;height:19px"><i class="gv"></i></div>
<div class="abs" style="left:561px;top:1026px;width:21px;height:20px;background:#a5c3ee"></div>
<!-- map close x -->
<svg class="abs" style="left:562px;top:189px" width="10" height="9" viewBox="0 0 10 9"><path d="M1 .8L9 8.200M9 .8L1 8.200" stroke="#666b75" stroke-width="1.800"/></svg>
<!-- splitter -->
<div class="abs" style="left:581px;top:179px;width:7px;height:869px;background:linear-gradient(90deg,#a9c6ee 0,#a9c6ee 1.300px,#6a97de 1.300px,#6a97de 2.200px,#add2fe 2.200px,#add2fe 6.300px,#e8f2ff 6.300px)"></div>
<!-- doc scrollbars -->
<div class="abs" style="left:1327px;top:179px;width:21px;height:869px;background:#a5c3ee"></div>
<div class="abs vsb" style="left:1327px;top:200px;width:20px;height:764px"></div>
<svg class="abs" style="left:1331.500px;top:208px" width="11" height="7" viewBox="0 0 11 7"><path d="M0 6.500L5.500 0 11 6.500z" fill="url(#ag)"/></svg>
<svg class="abs" style="left:1331.500px;top:949px" width="11" height="7" viewBox="0 0 11 7"><path d="M0 .5L5.500 7 11 .5z" fill="url(#ag)"/></svg>
<div class="abs thumb" style="left:1328px;top:635px;width:19px;height:11px;border-color:#5b79b3"></div>
<!-- split handle icon -->
<svg class="abs" style="left:1331px;top:183px" width="13" height="13" viewBox="0 0 13 13"><path d="M.5 3.500H2.500V1H6V3.500H11.500V10H9.500V12H6V10H.5z" fill="#efe6ee" stroke="#4a5a7a" stroke-width="1"/><circle cx="4" cy="6.500" r="1" fill="#6a7a9a"/><circle cx="8.500" cy="6.500" r="1" fill="#6a7a9a"/></svg>
<!-- browse buttons -->
<svg class="abs" style="left:1333px;top:969.500px" width="7" height="7.500" viewBox="0 0 9 9"><path d="M4.500 0L8 3.500H1zM4.500 3.500L8.500 7.500H.5zM1 8h7v1H1z" fill="#111"/></svg>
<svg class="abs" style="left:1332.500px;top:989.500px" width="8" height="8" viewBox="0 0 9 9"><circle cx="4.500" cy="4.500" r="3.300" fill="#c9c9c9" stroke="#222" stroke-width="1"/></svg>
<svg class="abs" style="left:1333px;top:1011px" width="7" height="7.500" viewBox="0 0 9 9"><path d="M4.500 9L8 5.500H1zM4.500 5.500L8.500 1.500H.5zM1 0h7v1H1z" fill="#111"/></svg>
<!-- doc hscroll -->
<div class="abs hsb" style="left:588px;top:1026px;width:739px;height:20px"></div>
<svg class="abs" style="left:596px;top:1030px" width="7.500" height="13" viewBox="0 0 8 13"><path d="M7.500 0L0 6.500 7.500 13z" fill="url(#ah)"/></svg>
<svg class="abs" style="left:1313px;top:1030px" width="7.500" height="13" viewBox="0 0 8 13"><path d="M.5 0L8 6.500.5 13z" fill="url(#ah)"/></svg>
<div class="abs thumbh" style="left:679px;top:1027px;width:612px;height:19px;border-color:#8da4c8"><i class="gv" style="left:303px"></i></div>
<!--/SCROLL-->
<!--STATUS-->
<div class="abs" style="left:0;top:1074px;width:1356px;height:3px;background:#a9c8f2"></div>
<div class="abs" style="left:8px;top:1046px;width:1340px;height:2px;background:linear-gradient(#5f87c9 0,#5f87c9 1px,#9dc0ef 1px)"></div>
<div id="status"><div id="srt"></div>
 <span class="t" style="left:16px;letter-spacing:0">Page: 60 of 102</span>
 <i class="ssep" style="left:115.500px"></i>
 <span class="t" style="left:125px">Words: 7/31,449</span>
 <i class="ssep" style="left:229.500px"></i>
 <i class="ssep" style="left:267.500px"></i>
 <span class="t" style="left:1117px">80%</span>
 <svg class="abs" style="left:241px;top:5px" width="16" height="14" viewBox="0 0 16 14"><rect x="2.500" y="2.500" width="13" height="11" fill="#fff" stroke="#6d7fa8"/><rect x="3" y="3" width="12" height="3" fill="#7ea3e0"/><path d="M3 8.500h12M3 11h12M7.500 6v7M11.500 6v7" stroke="#9fb4d8" stroke-width="1"/><circle cx="3" cy="3" r="2.800" fill="#d8432a" stroke="#8e2414" stroke-width=".6"/></svg>
 <div class="abs" style="left:989px;top:0;width:3px;height:26px;background:linear-gradient(90deg,#5c85c5 0,#5c85c5 1px,#f0f6fe 1px)"></div>
 <div class="abs" style="left:996px;top:2px;width:114px;height:23px;border:1px solid #6f98d6;border-radius:3px;background:linear-gradient(#dbe9fb,#c3d9f7 40%,#afcbf2 45%,#cbdff9);box-shadow:inset 0 0 0 1px rgba(255,255,255,.5)"></div>
 <div class="abs" style="left:997px;top:3px;width:22px;height:21px;border-radius:2px 0 0 2px;background:linear-gradient(#f6dcae 0,#f8d08a 38%,#f0a92c 42%,#f9c85c 75%,#fde796);border-right:1px solid #c9a55a"></div>
 <i class="vsep" style="left:1041px"></i><i class="vsep" style="left:1063px"></i><i class="vsep" style="left:1086px"></i>
 <svg class="abs" style="left:1001px;top:5px" width="15" height="16" viewBox="0 0 15 16"><rect x="1" y="1" width="13" height="14" fill="#fff" stroke="#444" stroke-width="1.600"/><path d="M3.500 4.500h8M3.500 7h8M3.500 9.500h8M3.500 12h8" stroke="#555" stroke-width="1.200"/></svg>
 <svg class="abs" style="left:1023px;top:5px" width="16" height="16" viewBox="0 0 16 16"><path d="M1 2C3 1 6 1 7.500 2.500V13C6 12 3 12 1 13zM15 2C13 1 10 1 8.500 2.500V13C10 12 13 12 15 13z" fill="#fff" stroke="#444" stroke-width="1.200"/><path d="M2.500 4.500h3.500M2.500 6.500h3.500M2.500 8.500h3.500M10 4.500h3.500M10 6.500h3.500M10 8.500h3.500" stroke="#555" stroke-width=".9"/><path d="M8 12.500v3" stroke="#444" stroke-width="2"/></svg>
 <svg class="abs" style="left:1045px;top:5px" width="17" height="16" viewBox="0 0 17 16"><rect x="1" y="1" width="12" height="10" fill="#fff" stroke="#444" stroke-width="1.400"/><path d="M3 4h8M3 6.500h6" stroke="#555" stroke-width="1.200"/><circle cx="11.500" cy="11" r="4" fill="#2a6fd0"/><path d="M9 9.500c1.500-1 3-.500 3 .5s-1.500 1.500-1 3c-1.500 0-2.500-2-2-3.500zM13 11c1 0 2 .5 2 1.500-.5 1-1.500 1.500-2 1.500z" fill="#4fae3c"/></svg>
 <svg class="abs" style="left:1069px;top:6px" width="14" height="14" viewBox="0 0 14 14"><path d="M4 1.500h8M7 4.500h6M7 7.500h6M4 10.500h8M4 13h6" stroke="#555" stroke-width="1.300"/><path d="M1 1.500h1.500M4 4.500h1.500M4 7.500h1.500M1 10.500h1.500M1 13h1.500" stroke="#555" stroke-width="1.300"/></svg>
 <svg class="abs" style="left:1091px;top:6px" width="15" height="14" viewBox="0 0 15 14"><path d="M1 1.500h13M1 4.500h13M1 7.500h13M1 10.500h13M1 13h13" stroke="#4a4a4a" stroke-width="1.700"/></svg>
 <!-- zoom slider -->
 <div class="abs" style="left:1180px;top:12px;width:126px;height:1px;background:#e6effb;box-shadow:0 1px 0 #5f84c0"></div>
 <div class="abs" style="left:1243px;top:8px;width:1px;height:9px;background:#e6effb;box-shadow:1px 0 0 #5f84c0"></div>
 <svg class="abs" style="left:1158.600px;top:1.300px" width="21" height="21" viewBox="0 0 20 20"><defs><linearGradient id="zg" x1="0" y1="0" x2="0" y2="1"><stop offset="0" stop-color="#fff"/><stop offset=".5" stop-color="#e4ecf8"/><stop offset=".52" stop-color="#c5d6ee"/><stop offset="1" stop-color="#eef4fc"/></linearGradient></defs><circle cx="10" cy="10" r="9.200" fill="url(#zg)" stroke="#2f528f" stroke-width=".9"/><rect x="5" y="9" width="10" height="2.200" fill="#4a5f88"/></svg>
 <svg class="abs" style="left:1305.700px;top:1.800px" width="21" height="21" viewBox="0 0 20 20"><circle cx="10" cy="10" r="9.200" fill="url(#zg)" stroke="#2f528f" stroke-width=".9"/><rect x="5" y="9" width="10" height="2.200" fill="#4a5f88"/><rect x="8.900" y="5" width="2.200" height="10" fill="#4a5f88"/></svg>
 <svg class="abs" style="left:1223px;top:4px" width="13" height="17" viewBox="0 0 13 17"><path d="M1 1h11v9.500L6.500 16 1 10.500z" fill="#e9f0fa" stroke="#6f86b4" stroke-width="1"/><path d="M2.500 2.500h8v7.500L6.500 14 2.500 10z" fill="none" stroke="#fff" stroke-width="1"/><path d="M6.500 5v7" stroke="#9fb0cf"/></svg>
 <svg class="abs" style="left:1335px;top:8px" width="13" height="13" viewBox="0 0 13 13"><g fill="#5f7fb8"><rect x="9" y="1" width="2" height="2"/><rect x="9" y="5" width="2" height="2"/><rect x="5" y="5" width="2" height="2"/><rect x="9" y="9" width="2" height="2"/><rect x="5" y="9" width="2" height="2"/><rect x="1" y="9" width="2" height="2"/></g><g fill="#e8f1fd"><rect x="10" y="2" width="2" height="2"/><rect x="10" y="6" width="2" height="2"/><rect x="6" y="6" width="2" height="2"/><rect x="10" y="10" width="2" height="2"/><rect x="6" y="10" width="2" height="2"/><rect x="2" y="10" width="2" height="2"/></g></svg>
</div>
</div>
</body>
</html>
